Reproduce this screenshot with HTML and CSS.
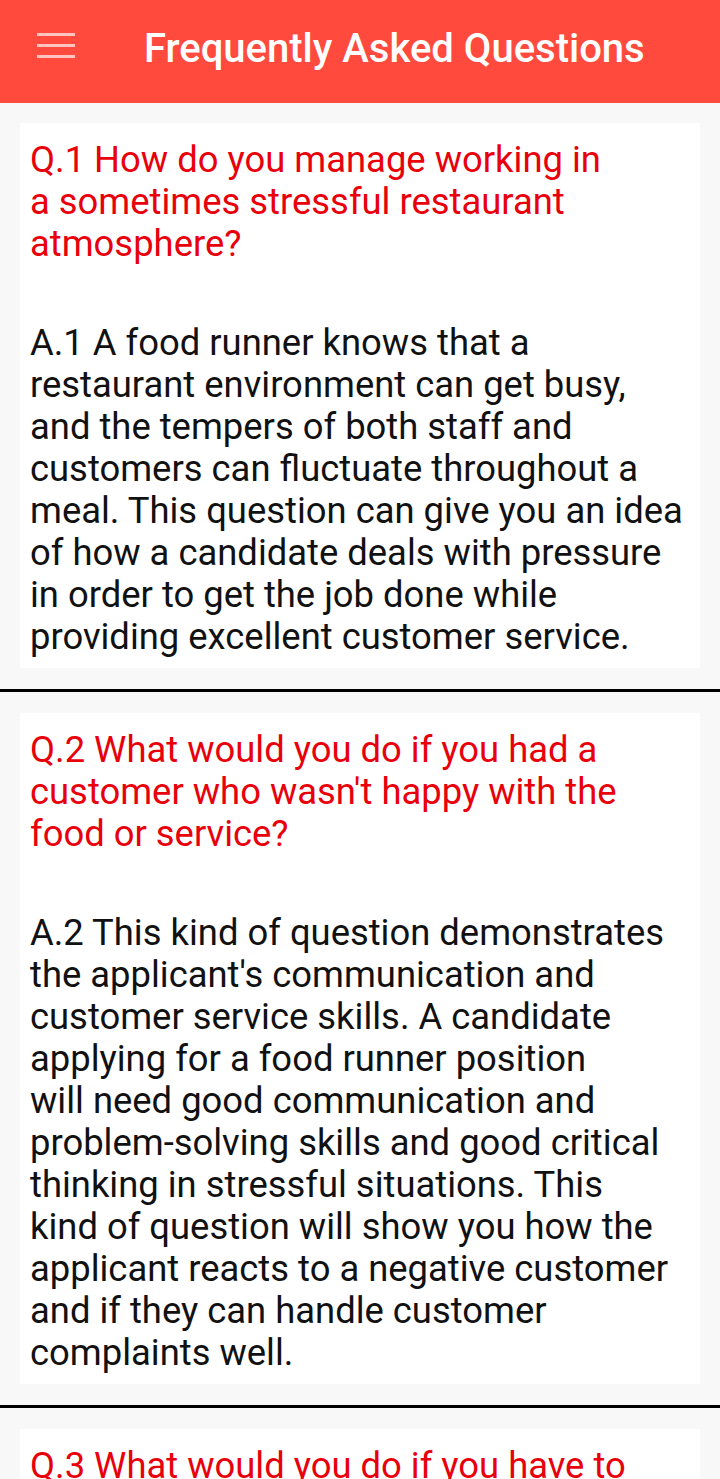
FILE: index.html
```html
<!DOCTYPE html>
<html lang="en">
<head>
<meta charset="utf-8">
<title>Frequently Asked Questions</title>
<link rel="stylesheet" href="styles.css">
</head>
<body>
<header class="toolbar">
  <svg class="menu-icon" width="38" height="25" viewBox="0 0 38 25" aria-hidden="true">
    <rect x="0" y="0" width="38" height="3" fill="#ffc4bf"/>
    <rect x="0" y="11" width="38" height="3" fill="#ffc4bf"/>
    <rect x="0" y="22" width="38" height="3" fill="#ffc4bf"/>
  </svg>
  <h1 class="title">Frequently Asked Questions</h1>
</header>
<main class="faq-list">
  <section class="faq-item">
    <div class="card">
      <p class="question">Q.1 How do you manage working in<br>a sometimes stressful restaurant<br>atmosphere?</p>
      <p class="answer">A.1 A food runner knows that a<br>restaurant environment can get busy,<br>and the tempers of both staff and<br>customers can fluctuate throughout a<br>meal. This question can give you an idea<br>of how a candidate deals with pressure<br>in order to get the job done while<br>providing excellent customer service.</p>
    </div>
  </section>
  <section class="faq-item">
    <div class="card">
      <p class="question">Q.2 What would you do if you had a<br>customer who wasn't happy with the<br>food or service?</p>
      <p class="answer">A.2 This kind of question demonstrates<br>the applicant's communication and<br>customer service skills. A candidate<br>applying for a food runner position<br>will need good communication and<br>problem-solving skills and good critical<br>thinking in stressful situations. This<br>kind of question will show you how the<br>applicant reacts to a negative customer<br>and if they can handle customer<br>complaints well.</p>
    </div>
  </section>
  <section class="faq-item">
    <div class="card">
      <p class="question">Q.3 What would you do if you have to<br>deliver several orders at the<br>same time?</p>
      <p class="answer">A.3 This question shows how well a<br>candidate can prioritize tasks and<br>stay organized during busy shifts.</p>
    </div>
  </section>
</main>
</body>
</html>
```
FILE: styles.css
```css
html, body {
  margin: 0;
  padding: 0;
}

body {
  background: #f8f8f8;
  font-family: Roboto, "Liberation Sans", sans-serif;
}

.toolbar {
  height: 103px;
  box-sizing: border-box;
  background: #ff4a3d;
  display: flex;
  align-items: flex-start;
  padding-left: 37px;
}

.menu-icon {
  display: block;
  margin-top: 33px;
  flex: none;
}

.title {
  margin: 25px 0 0 69px;
  font-size: 40px;
  line-height: 47px;
  font-weight: 500;
  color: #ffffff;
  white-space: nowrap;
}

.faq-list {
  display: flex;
  flex-direction: column;
}

.faq-item {
  padding: 20px 20px 21px;
  border-bottom: 3px solid #000000;
}

.faq-item + .faq-item {
  padding-top: 21px;
}

.card {
  background: #ffffff;
  padding: 16px 10px 10px;
}

.question,
.answer {
  margin: 0;
  font-size: 36.4px;
  line-height: 42px;
  white-space: nowrap;
}

.question {
  color: #e8000b;
  margin-bottom: 57px;
}

.answer {
  color: #111111;
}
```
